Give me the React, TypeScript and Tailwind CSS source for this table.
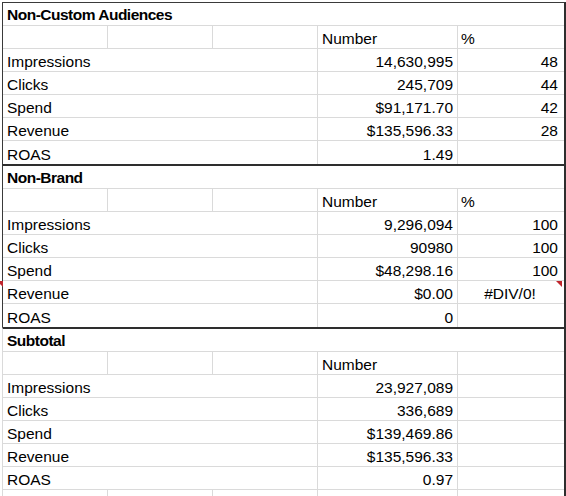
import React from "react";

type Row =
  | { kind: "title"; text: string }
  | { kind: "header"; pct: boolean }
  | { kind: "data"; label: string; num: string; pct?: string; center?: boolean; flag?: boolean };

const GRID = "border-[#dadada]";

function TitleRow({ text }: { text: string }) {
  return (
    <div className={`h-[23px] flex items-end border-b ${GRID}`}>
      <span className="pl-[4px] pb-[1px] font-bold text-[15.5px] tracking-[-0.5px] leading-[18px]">{text}</span>
    </div>
  );
}

function HeaderRow({ pct }: { pct: boolean }) {
  return (
    <div className={`h-[23px] flex border-b ${GRID}`}>
      <div className={`w-[105px] border-r ${GRID}`} />
      <div className={`w-[105px] border-r ${GRID}`} />
      <div className={`w-[105px] border-r ${GRID}`} />
      <div className={`w-[140px] border-r ${GRID} flex items-end pl-[4px] leading-[18px]`}>Number</div>
      <div className="w-[104px] flex items-end pl-[3px] leading-[18px]">{pct ? "%" : ""}</div>
    </div>
  );
}

function DataRow({
  label,
  num,
  pct,
  center,
  flag,
  last,
}: {
  label: string;
  num: string;
  pct?: string;
  center?: boolean;
  flag?: boolean;
  last?: boolean;
}) {
  return (
    <div className={`relative h-[23px] flex ${last ? "" : `border-b ${GRID}`}`}>
      {flag && (
        <div className="absolute top-0 left-[-6px] w-[6px] h-[6px] bg-[#c0262d] [clip-path:polygon(0_0,100%_0,100%_100%)]" />
      )}
      <div className={`w-[315px] border-r ${GRID} flex items-end pl-[4px] leading-[18px]`}>{label}</div>
      <div className={`w-[140px] border-r ${GRID} flex items-end justify-end pr-[4px] leading-[18px]`}>{num}</div>
      <div
        className={`relative w-[104px] flex items-end leading-[18px] ${
          center ? "justify-center" : "justify-end pr-[4px]"
        }`}
      >
        {pct ?? ""}
        {flag && (
          <div className="absolute top-0 right-0 w-[6px] h-[6px] bg-[#c0262d] [clip-path:polygon(0_0,100%_0,100%_100%)]" />
        )}
      </div>
    </div>
  );
}

function Section({ rows, first }: { rows: Row[]; first: boolean }) {
  return (
    <div
      className={`relative ${
        first ? "border-t border-t-[#3a3a3a]" : "border-t-2 border-t-[#2e2e2e]"
      } border-l border-l-[#3a3a3a] border-r-2 border-r-[#2e2e2e]`}
    >
      {rows.map((r, i) => {
        const last = i === rows.length - 1;
        if (r.kind === "title") return <TitleRow key={i} text={r.text} />;
        if (r.kind === "header") return <HeaderRow key={i} pct={r.pct} />;
        return (
          <DataRow
            key={i}
            label={r.label}
            num={r.num}
            pct={r.pct}
            center={r.center}
            flag={r.flag}
            last={last}
          />
        );
      })}
    </div>
  );
}

const s1: Row[] = [
  { kind: "title", text: "Non-Custom Audiences" },
  { kind: "header", pct: true },
  { kind: "data", label: "Impressions", num: "14,630,995", pct: "48" },
  { kind: "data", label: "Clicks", num: "245,709", pct: "44" },
  { kind: "data", label: "Spend", num: "$91,171.70", pct: "42" },
  { kind: "data", label: "Revenue", num: "$135,596.33", pct: "28" },
  { kind: "data", label: "ROAS", num: "1.49" },
];

const s2: Row[] = [
  { kind: "title", text: "Non-Brand" },
  { kind: "header", pct: true },
  { kind: "data", label: "Impressions", num: "9,296,094", pct: "100" },
  { kind: "data", label: "Clicks", num: "90980", pct: "100" },
  { kind: "data", label: "Spend", num: "$48,298.16", pct: "100" },
  { kind: "data", label: "Revenue", num: "$0.00", pct: "#DIV/0!", center: true, flag: true },
  { kind: "data", label: "ROAS", num: "0" },
];

const s3: Row[] = [
  { kind: "title", text: "Subtotal" },
  { kind: "header", pct: false },
  { kind: "data", label: "Impressions", num: "23,927,089" },
  { kind: "data", label: "Clicks", num: "336,689" },
  { kind: "data", label: "Spend", num: "$139,469.86" },
  { kind: "data", label: "Revenue", num: "$135,596.33" },
  { kind: "data", label: "ROAS", num: "0.97" },
];

export default function App() {
  return (
    <div
      className="w-[566px] h-[496px] overflow-hidden bg-white pt-[2px] pl-[2px] text-black text-[15.5px]"
      style={{ fontFamily: '"Liberation Sans", Arial, sans-serif' }}
    >
      <Section rows={s1} first={true} />
      <Section rows={s2} first={false} />
      <div className={`border-t-2 border-t-[#2e2e2e] border-l ${GRID} border-r-2 border-r-[#2e2e2e]`}>
        {s3.map((r, i) => {
          if (r.kind === "title") return <TitleRow key={i} text={r.text} />;
          if (r.kind === "header") return <HeaderRow key={i} pct={r.pct} />;
          return <DataRow key={i} label={r.label} num={r.num} pct={r.pct} />;
        })}
        <div className="h-[23px] flex">
          <div className={`w-[105px] border-r ${GRID}`} />
          <div className={`w-[105px] border-r ${GRID}`} />
          <div className={`w-[105px] border-r ${GRID}`} />
          <div className={`w-[140px] border-r ${GRID}`} />
          <div className="w-[104px]" />
        </div>
      </div>
    </div>
  );
}
